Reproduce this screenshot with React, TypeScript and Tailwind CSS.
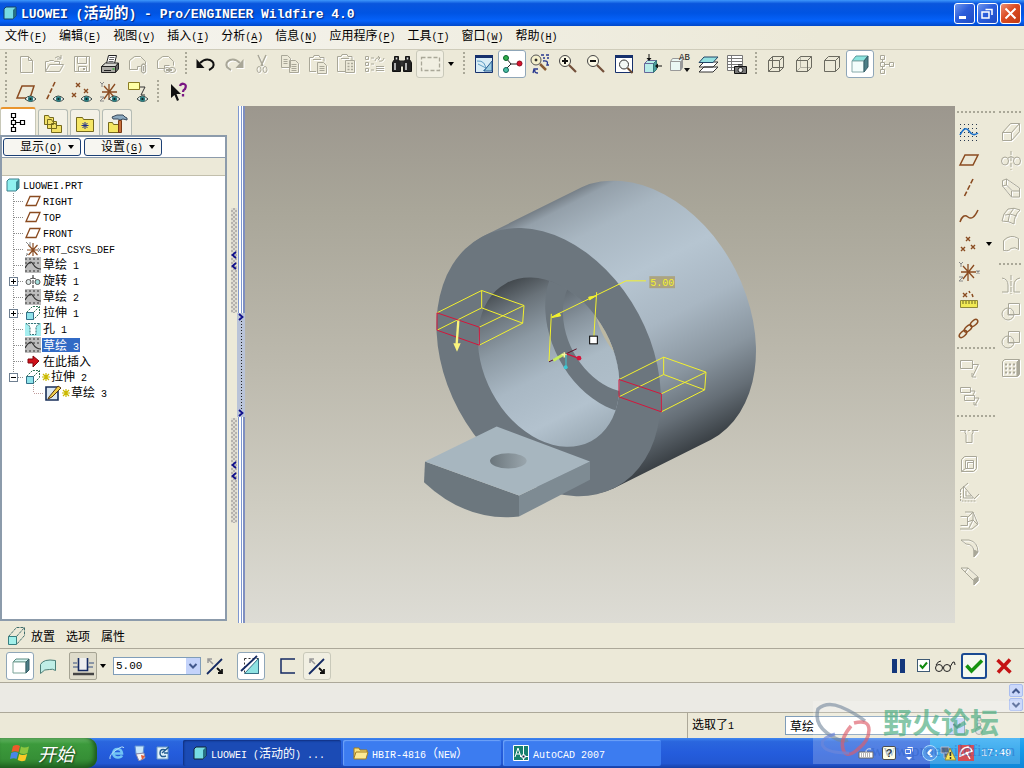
import React, { type ReactNode } from "react";

const LATIN = "font-['Liberation_Mono',monospace]";

/* Splits mixed text so that ideographs and half-width letters each get their own face and size. */
function T({ children, latin = "text-[10px]" }: { children: string; latin?: string }) {
  const parts = children.split(/([\u2e80-\uffef]+)/).filter(Boolean);
  return (
    <span className="whitespace-pre">
      {parts.map((p, i) =>
        /[\u2e80-\uffef]/.test(p) ? (
          <span key={i}>{p}</span>
        ) : (
          <span key={i} className={LATIN + " " + latin}>
            {p}
          </span>
        ),
      )}
    </span>
  );
}

function Ic({ children, dim = false, className = "text-[#222]" }: { children: ReactNode; dim?: boolean; className?: string }) {
  return (
    <svg
      viewBox="0 0 24 24"
      fill="none"
      stroke="currentColor"
      strokeWidth="1"
      aria-hidden="true"
      className={"size-6 shrink-0 " + (dim ? "text-[#a9a798] drop-shadow-[1px_1px_0_#fff]" : className)}
    >
      {children}
    </svg>
  );
}

const CUBE = "M4.5 8.5h11v11h-11zM4.5 8.5l4-4h11v11l-4 4M15.5 8.5l4-4";
const eye = (
  <g stroke="none">
    <path d="M11 19q5-6 11 0q-5 5-11 0z" fill="#fff" stroke="#35423f" />
    <circle cx="16.5" cy="19" r="2.7" fill="#2b7d80" />
    <circle cx="16.5" cy="19" r="1.1" fill="#102020" />
  </g>
);
const brown = "#8a4b20";
const cross = (x: number, y: number, c = brown, r = 2) => (
  <path d={`M${x - r} ${y - r}l${2 * r} ${2 * r}m0 ${-2 * r}l${-2 * r} ${2 * r}`} stroke={c} strokeWidth="1.4" />
);

const I = {
  newFile: (<Ic dim><path d="M6.5 4.5h8l4 4v12h-12zM14.5 4.5v4h4" /></Ic>),
  open: (<Ic dim><path d="M3.5 19.5v-10h3l1-1h4l1 1h5v3M3.5 19.5l4-7h14l-4 7zM13 6q3-3 6 0m0-3v4h-4" /></Ic>),
  save: (<Ic dim><path d="M4.5 4.5h15v15h-15zM7.5 4.5v7h9v-7M8.5 19.5v-5h8v5" /><path d="M14 16v2" strokeWidth="2" /></Ic>),
  print: (
    <Ic>
      <path d="M8.5 11.5l2-8h8l-2 8z" fill="#fff" />
      <path d="M11.5 5.5h5M11 7.500h5M10.500 9.500h5" stroke="#666" />
      <path d="M3.500 14.500l4-3.500h13l-3 3.500z" fill="#d7d7d2" />
      <path d="M3.500 14.500h14v6h-14z" fill="#aaa9a4" />
      <path d="M17.500 14.500l3-3.500v6l-3 3.500z" fill="#666" />
      <path d="M6 18.500h7" /><path d="M14.500 17h2" stroke="#0a0" />
    </Ic>
  ),
  mailA: (<Ic dim><path d="M3.500 17.500v-9l5-4h6l5 5v3M3.500 17.500h8v-3h3" /><path d="M15.500 13.500q2-3 4 0v6q-2 3-4 0zM17.500 14v5" strokeWidth="1.300" /></Ic>),
  mailB: (<Ic dim><path d="M3.500 16.500v-8l5-4h6l5 5v4M3.500 16.500h7v-3h5" /><ellipse cx="13" cy="18" rx="3" ry="2.500" /><ellipse cx="18" cy="18" rx="3.500" ry="2.500" /><path d="M12 18h6" strokeWidth="2" /></Ic>),
  undo: (<Ic><path d="M6 11q5-5 10-3t3 7q-2 2-4 3" stroke="#111" strokeWidth="2" /><path d="M2.500 7v9h8z" fill="#111" stroke="none" /></Ic>),
  redo: (<Ic dim><path d="M18 11q-5-5-10-3t-3 7q2 2 4 3" strokeWidth="2" /><path d="M21.500 7v9h-8z" fill="currentColor" stroke="none" /></Ic>),
  cut: (<Ic dim><path d="M8 3l5 11M16 3l-5 11" strokeWidth="1.500" /><ellipse cx="9" cy="17.500" rx="2" ry="3" /><ellipse cx="15" cy="17.500" rx="2" ry="3" /></Ic>),
  copy: (<Ic dim><path d="M3.500 3.500h6l3 3v9h-9zM11.500 8.500h6l3 3v9h-9z" fill="#ece9d8" /><path d="M5.500 7.500h4M5.500 9.500h4M5.500 11.500h4M13.500 12.500h5M13.500 14.500h5M13.500 16.500h5M13.500 18.500h5" /></Ic>),
  paste: (<Ic dim><path d="M10 19.500H3.500v-14H7l1-2h5l1 2h4v4M7 7.500h8" /><path d="M11.500 10.500h6l3 3v8h-9z" fill="#ece9d8" /><path d="M13.500 14.500h5M13.500 16.500h5M13.500 18.500h5" /></Ic>),
  pasteSp: (<Ic dim><path d="M11 19.500H3.500v-15H7l1-2h5l1 2h4v4M7 6.500h8" /><path d="M11.500 8.500h9v12h-9z" fill="#ece9d8" /><path d="M13.500 11.500h2m1.500 0h2M13.500 14.500h2m1.500 0h2M13.500 17.500h2m1.500 0h2" strokeWidth="1.500" /></Ic>),
  regen: (<Ic dim><path d="M3.500 4.500h3v3h-3zM3.500 10.500h3v3h-3zM3.500 16.500h3v3h-3zM9 6h3M9 12h3M9 18h3M13 9q1-4 5-3m-2-2l2 2-2 2M22 6q-1 4-5 3M14 14.500h8M14 16.500h8M14 18.500h8" /></Ic>),
  find: (
    <Ic>
      <path d="M4.500 4.500h4v3l2 3v9h-8v-9l2-3zM15.500 4.500h4v3l2 3v9h-8v-9l2-3z" fill="#222" stroke="#111" />
      <path d="M10 9h4v5h-4z" fill="#333" />
      <path d="M5 11v7M16 11v7M6.500 5.500v2M17.500 5.500v2" stroke="#ddd" strokeWidth="1.500" />
    </Ic>
  ),
  box: (<Ic className="text-[#a9a798]"><path d="M3.500 5.500h18v13h-18z" strokeDasharray="4 2" strokeWidth="1.300" /></Ic>),
  sketchRef: (<Ic><path d="M3.500 3.500h17v17h-17z" fill="#d8ecf6" stroke="#16306c" /><path d="M3 3h18v3H3z" fill="#16306c" stroke="none" /><path d="M5 9q9-1 9 10M11 19l9-9M6 12l8 4" stroke="#5d9cc4" /><path d="M12 19l8-10v10z" fill="#9bcce0" stroke="#2d5f94" /></Ic>),
  spin: (<Ic><path d="M6 6l5 6-5 5M11 12h8" stroke="#222" /><circle cx="6" cy="6" r="2.500" fill="#2fae4a" stroke="#0b602a" /><circle cx="6" cy="18" r="2.500" fill="#4cc0a4" stroke="#14665a" /><circle cx="19.500" cy="11.500" r="2.500" fill="#d8102c" stroke="#8d0d1e" /></Ic>),
  orient: (<Ic><circle cx="8" cy="8" r="5" fill="#f4efcc" stroke="#555" /><circle cx="8" cy="8" r="1" fill="#222" /><path d="M12 12l6 6" stroke="#8a5c35" strokeWidth="2.500" /><path d="M13 3h3m2 0h3M15 6h2m2 0h2M15 9q6-1 4 4l2 0M7 18q-1 3 3 3M10 17l-4 0-1 4" stroke="#27378e" strokeWidth="1.300" /></Ic>),
  zoomIn: (<Ic><circle cx="9" cy="9" r="5.500" fill="#fbf8e5" stroke="#444" /><path d="M6 9h6M9 6v6" stroke="#111" strokeWidth="2" /><path d="M13 13l7 7" stroke="#73503a" strokeWidth="2.200" /></Ic>),
  zoomOut: (<Ic><circle cx="9" cy="9" r="5.500" fill="#fbf8e5" stroke="#444" /><path d="M6 9h6" stroke="#111" strokeWidth="2" /><path d="M13 13l7 7" stroke="#73503a" strokeWidth="2.200" /></Ic>),
  refit: (<Ic><path d="M3.500 3.500h17v17h-17z" fill="#fff" stroke="#16306c" /><path d="M3 3h18v3H3z" fill="#16306c" stroke="none" /><circle cx="12" cy="12.500" r="4.500" fill="#f3f8f6" stroke="#333" /><path d="M15.500 16l5 5" stroke="#6b4a32" strokeWidth="2" /></Ic>),
  orientBox: (<Ic><path d="M4.500 11.500h9v9h-9zM4.500 11.500l3-3h9v9l-3 3" fill="#b6ece8" stroke="#669" /><path d="M13.500 11.500l3-3v9l-3 3z" fill="#4a9a9c" stroke="#377" /><path d="M9 2v5M22 14h-5" stroke="#111" /><path d="M6.500 6h5L9 9zM18 11.500v5l-3-2.500z" fill="#111" stroke="none" /></Ic>),
  views: (<Ic><path d="M2.500 9.500l2-3h10v9l-2 3h-10zM2.500 9.500h10v9" fill="#eaf7f4" stroke="#999" /><path d="M12.500 9.500l2-3v9l-2 3z" fill="#999" stroke="none" /><text x="11" y="8" fontSize="9" fontFamily="Liberation Mono" fill="#111" stroke="none">AB</text><path d="M16 16h6l-3 4z" fill="#111" stroke="none" /></Ic>),
  layers: (<Ic><path d="M3 20l5-5h14l-5 5zM3 15l5-5h14l-5 5z" fill="#fff" stroke="#333" /><path d="M3 10.500l5-5.500h14l-5 5.500z" fill="#94e0e0" stroke="#246" /></Ic>),
  viewMgr: (<Ic><path d="M3.500 3.500h15v15h-15zM3.500 6.500h15M3.500 9.500h15M3.500 12.500h15M3.500 15.500h15M7.500 3.500v15" fill="#fff" stroke="#777" /><path d="M10.500 14.500h12v7h-12zM14 13h4" fill="#777" stroke="#111" /><circle cx="16.500" cy="18" r="2.500" fill="#eee" /></Ic>),
  wire: (<Ic className="text-[#6b6a60]"><path d={CUBE + "M8.500 4.500v11h11M8.500 15.500l-4 4"} /></Ic>),
  hidden: (<Ic className="text-[#6b6a60]"><path d="M8.500 4.500v11h11M8.500 15.500l-4 4" stroke="#b3b1a4" /><path d={CUBE} /></Ic>),
  noHidden: (<Ic className="text-[#6b6a60]"><path d={CUBE} /></Ic>),
  shaded: (<Ic><path d="M4 9l4-5h12l-4 5z" fill="#8be4df" stroke="#5a9a9c" /><path d="M4 9h12v11H4z" fill="#f4fdfc" stroke="#8aa" /><path d="M16 9l4-5v11l-4 5z" fill="#4c7e86" stroke="#355d66" /></Ic>),
  treeDim: (<Ic dim><path d="M4.500 3.500h4v4h-4zM4.500 10.500h4v4h-4zM4.500 17.500h4v4h-4zM13.500 10.500h4v4h-4zM6.500 7.500v3m0 4v3m2-5h5" /></Ic>),
  plane: (<Ic><path d="M3 17L8 7h13l-5 10z" stroke={brown} strokeWidth="1.500" /></Ic>),
  planeEye: (<Ic><path d="M3 18L8 6h12l-4 12z" stroke={brown} strokeWidth="1.500" />{eye}</Ic>),
  axis: (<Ic><path d="M16 3L7 21" stroke={brown} strokeWidth="1.600" strokeDasharray="5 2" /></Ic>),
  axisEye: (<Ic><path d="M13 2L4 21" stroke={brown} strokeWidth="1.600" strokeDasharray="5 2" />{eye}</Ic>),
  pts: (<Ic>{cross(11, 7)}{cross(6, 17)}{cross(16, 15)}</Ic>),
  ptsEye: (<Ic>{cross(8, 5)}{cross(4, 15)}{cross(16, 11)}{eye}</Ic>),
  csys: (<Ic><path d="M11 4v17M4 12h15M6 6l11 12M17 5L6 19" stroke={brown} strokeWidth="1.300" />{cross(21, 12, "#888", 1.5)}<path d="M2 2l2 2 2-2M4 4v3M2 17h4l-4 4h4" stroke="#888" /></Ic>),
  csysEye: (<Ic><path d="M11 4v16M4 12h15M6 6l11 12M17 4L6 19" stroke={brown} strokeWidth="1.300" /><path d="M2 2l2 2 2-2M4 4v3M2 17h4l-4 4h4" stroke="#888" />{eye}</Ic>),
  note: (<Ic><path d="M2.500 2.500h11v7h-11z" fill="#ffffa5" stroke="#8a7c22" /><path d="M14 7h5l-4 8h4" stroke="#333" />{eye}</Ic>),
  help: (<Ic><path d="M5 4v14l3.500-3 2.500 6 2-1-2.500-6H15z" fill="#111" stroke="none" /><path d="M14 6q1-3 4-2t1 5q-2 1-2 3M17 14v2.500" stroke="#7a1683" strokeWidth="2.300" /></Ic>),
  sketch: (<Ic><path d="M3 4.500h18M3 8.500h18M3 12.500h18M3 16.500h18M3 20.500h18" stroke="#26374e" strokeDasharray="1 3" /><path d="M3 15q5-10 9-4t9 2" stroke="#1b70c9" strokeWidth="1.600" /></Ic>),
  curve: (<Ic><path d="M3 18q3-9 8-5t10-7" stroke={brown} strokeWidth="1.500" /></Ic>),
  ruler: (<Ic>{cross(8, 7)}<path d="M12 3l1 2m2 1l1 3" stroke={brown} strokeWidth="1.500" /><path d="M3.500 12.500h17v7h-17z" fill="#f1ea54" stroke="#8e8838" /><path d="M6 13v3m3-3v3m3-3v3m3-3v3m3-3v3" stroke="#6b6620" /></Ic>),
  chain: (<Ic>{[[6, 18], [11, 12.5], [17, 7]].map(([x, y]) => <ellipse key={x} cx={x} cy={y} rx="4.500" ry="2.400" transform={`rotate(-42 ${x} ${y})`} stroke={brown} strokeWidth="1.500" />)}</Ic>),
  extrude: (<Ic dim><path d="M3.500 12.500h9v8h-9zM3.500 12.500l8-9h9v8l-8 9M12.500 12.500l8-9" /></Ic>),
  revolve: (<Ic dim><ellipse cx="6" cy="13" rx="3.500" ry="4" /><ellipse cx="18" cy="13" rx="3.500" ry="4" /><path d="M9 10q3-3 6 0" /><path d="M12 3v19" strokeDasharray="4 2" /></Ic>),
  sweep: (<Ic dim><path d="M3.500 4.500l4-1.500v6l-4 1zM7.500 3l13 9v9h-8l-9-11M7.500 9l6 6h7M12.500 21v-6" /></Ic>),
  blend: (<Ic dim><path d="M9 5q6-2 12 1-6 5-6 14-5-3-12-3 1-8 6-12zM6 11q5-2 12 1M15 4q-6 6-6 14" /></Ic>),
  surf: (<Ic dim><path d="M4.500 18.500v-10q7-7 15-2v11q-3-3-8-1-1 3-7 2z" /></Ic>),
  mirror: (<Ic dim><path d="M12 3v19" strokeDasharray="5 1" /><path d="M3 6q6 1 6 7v7H3M21 6q-6 1-6 7v7h6" /></Ic>),
  merge: (<Ic dim><path d="M9.500 3.500h11v11h-11z" /><circle cx="9" cy="14" r="6" /><path d="M9 9v6h6" /></Ic>),
  pattern: (<Ic dim><path d="M3.500 5.500l2-2h15v15l-2 2h-15z" /><path d="M20 4v14l-2 2V6z" fill="currentColor" /><path d="M6 8.500h10M6 12.500h10M6 16.500h10" strokeDasharray="2 2" strokeWidth="2" /></Ic>),
  annot: (<Ic dim><path d="M3.500 4.500h12v8h-12zM15.500 8.500h6l-6 12M15 17v4h4" /></Ic>),
  annot2: (<Ic dim><path d="M3.500 3.500h10v5h-10zM7.500 11.500h10v5h-10zM13 7h5l-2 4M17 14h5l-4 7M17 18v3h3" /></Ic>),
  hole: (<Ic dim><path d="M3 6.500h5v2l1 2v8h6v-8l1-2v-2h5" /><path d="M3 6.500h18" strokeDasharray="2 2" /></Ic>),
  shell: (<Ic dim><path d="M4.500 7.500l3-3h12v12l-3 3h-12zM8.500 8.500h8v8h-8zM10.500 10.500h6M10.500 10.500v6M4.500 19.500l4-3" /></Ic>),
  rib: (<Ic dim><path d="M3 10l8-7M6.500 6v12h10zM9 11v5h5M17 19l5-5" /><path d="M3.500 10v11h15" strokeDasharray="2 1" /></Ic>),
  draft: (<Ic dim><path d="M3.500 8.500h7v9h-7M8 4h8l5 12-6 5H3M11 9l5-5M10 14l6-2 5 5M16 4v8l-4 8" /></Ic>),
  round: (<Ic dim><path d="M4 4h8q9 2 9 12l-4 5v-6q-1-7-8-7l-5-4" /><path d="M17 14l4 2-4 5z" fill="currentColor" /></Ic>),
  chamfer: (<Ic dim><path d="M4 4h7l10 9v4l-4 4v-4l-9-9-4-4M11 4L8 8" /><path d="M17 15l4-2v4l-4 4z" fill="currentColor" /></Ic>),
  solid: (<Ic><path d="M5 8l3-3h13l-3 3z" fill="#d9f7f4" stroke="#5a8a80" /><path d="M5 8h13v11H5z" fill="#fff" stroke="#7aa398" /><path d="M18 8l3-3v11l-3 3z" fill="#4c7e86" stroke="#355d66" /></Ic>),
  surface: (<Ic><path d="M4.500 19.500v-9q3-6 15-4v10q-3-2-6-1-5-1-9 4z" fill="#bfeee6" stroke="#4b7f78" /></Ic>),
  depth: (<Ic><path d="M2 9h4m12 0h5M2 13h20" stroke="#8a95a5" strokeWidth="2" /><path d="M7.500 4v12.500h9V4" stroke="#142a63" strokeWidth="1.600" fill="#eee" /><path d="M2 20h21" stroke="#444" strokeWidth="2.500" /></Ic>),
  flip: (<Ic><path d="M4 20L19 5" stroke="#142a63" strokeWidth="1.800" /><path d="M5 5l5 5M5 9V5h4" stroke="#999" strokeWidth="1.500" /><path d="M14 14l5 5M15 19h4v-4" stroke="#111" strokeWidth="1.800" /></Ic>),
  removeMat: (<Ic><path d="M5.500 4.500h14v15h-14z" stroke="#333" strokeDasharray="2 2" /><path d="M19.500 4.500v15h-14z" fill="#8ee3e3" stroke="#356f86" /><path d="M2 17L18 2" stroke="#142a63" strokeWidth="1.800" /></Ic>),
  thin: (<Ic><path d="M20 5H6v14h14" stroke="#142a63" strokeWidth="1.500" /></Ic>),
  sweepTeal: (<Ic><path d="M4.500 12.500h8v8h-8z" fill="#a3f0ea" stroke="#387f80" /><path d="M4.500 12.500l8-9h8v8l-8 9M12.500 12.500l8-9" stroke="#3f6c6a" strokeDasharray="3 1" /></Ic>),
};

function Tool({ label, children, on = false, faint = false }: { label: string; children: ReactNode; on?: boolean; faint?: boolean }) {
  return (
    <button
      type="button"
      aria-label={label}
      className={
        "flex size-7 shrink-0 items-center justify-center rounded-[3px] " +
        (on ? "border border-[#8fa6b8] bg-white" : faint ? "border border-[#c9c9ba] bg-[#f1efe2]" : "")
      }
    >
      {children}
    </button>
  );
}

function Grip() {
  return (
    <span className="flex h-7 w-3 shrink-0 items-center justify-center">
      <span className="h-6 w-[2px] bg-[repeating-linear-gradient(180deg,#aaa898_0_2px,transparent_2px_4px)]" />
    </span>
  );
}
function HGrip() {
  return (
    <span className="flex h-3 w-full items-center px-0.5">
      <span className="h-[2px] w-full bg-[repeating-linear-gradient(90deg,#aaa898_0_2px,transparent_2px_4px)]" />
    </span>
  );
}
function Caret({ className = "" }: { className?: string }) {
  return (
    <svg viewBox="0 0 6 4" className={"h-1 w-1.5 shrink-0 " + className} aria-hidden="true">
      <path d="M0 0h6L3 4z" fill="currentColor" />
    </svg>
  );
}
function Chevron({ up = false }: { up?: boolean }) {
  return (
    <svg viewBox="0 0 10 8" fill="none" stroke="#42588c" strokeWidth="2" className="h-2 w-2.5" aria-hidden="true">
      <path d={up ? "M1.500 6L5 2.500 8.500 6" : "M1.500 2L5 5.500 8.500 2"} />
    </svg>
  );
}

const menus: [string, string][] = [
  ["文件", "F"], ["编辑", "E"], ["视图", "V"], ["插入", "I"], ["分析", "A"], ["信息", "N"],
  ["应用程序", "P"], ["工具", "T"], ["窗口", "W"], ["帮助", "H"],
];

function Mnemonic({ k }: { k: string }) {
  return (
    <span className="font-['Liberation_Mono',monospace] text-[10px]">
      (<span className="underline underline-offset-2">{k}</span>)
    </span>
  );
}

function TitleBar() {
  return (
    <header className="flex h-[26px] shrink-0 items-center bg-[linear-gradient(180deg,#3f97fb_0,#0a56dd_14%,#0054e3_50%,#0562fa_80%,#0148c9_100%)] pr-[3px] pl-[3px]">
      <svg viewBox="0 0 14 14" className="size-3.5 shrink-0" aria-hidden="true">
        <path d="M1 3l2-2h10v9l-3 3H1z" fill="#76dbe4" stroke="#164064" />
        <path d="M10 4l3-3v9l-3 3z" fill="#267283" />
      </svg>
      <h1 className="ml-1 flex-1 text-[15px] leading-6 font-bold text-white [text-shadow:1px_1px_1px_#06277c]">
        <T latin="text-[13px]">LUOWEI (活动的) - Pro/ENGINEER Wildfire 4.0</T>
      </h1>
      <div className="flex gap-[2px]">
        {["最小化", "还原", "关闭"].map((l, i) => (
          <button
            key={l}
            type="button"
            aria-label={l}
            className={
              "size-[21px] rounded-[3px] border border-white " +
              (i === 2 ? "bg-[linear-gradient(135deg,#ee9177,#db4b22_45%,#c03a12)]" : "bg-[linear-gradient(135deg,#6f97ee,#2c5edb_45%,#1e4bc4)]")
            }
          >
            <svg viewBox="0 0 19 19" fill="none" stroke="#fff" strokeWidth="2" className="size-full" aria-hidden="true">
              {i === 0 && <path d="M4 13.500h7" strokeWidth="3" />}
              {i === 1 && <path d="M4 8h7v6H4zM7.500 5.500H14V11" strokeWidth="1.500" />}
              {i === 2 && <path d="M4.500 4.500l10 10m0-10l-10 10" />}
            </svg>
          </button>
        ))}
      </div>
    </header>
  );
}

function Toolbars() {
  return (
    <div className="h-14 shrink-0">
      <div className="flex items-center">
        <Grip />
        <Tool label="新建">{I.newFile}</Tool>
        <Tool label="打开">{I.open}</Tool>
        <Tool label="保存">{I.save}</Tool>
        <Tool label="打印">{I.print}</Tool>
        <Tool label="发送附件">{I.mailA}</Tool>
        <Tool label="发送链接">{I.mailB}</Tool>
        <Grip />
        <Tool label="撤消">{I.undo}</Tool>
        <Tool label="重做">{I.redo}</Tool>
        <Tool label="剪切">{I.cut}</Tool>
        <Tool label="复制">{I.copy}</Tool>
        <Tool label="粘贴">{I.paste}</Tool>
        <Tool label="选择性粘贴">{I.pasteSp}</Tool>
        <Tool label="再生">{I.regen}</Tool>
        <Tool label="查找">{I.find}</Tool>
        <Tool label="选取框" faint>{I.box}</Tool>
        <button type="button" aria-label="选取选项" className="flex h-7 w-3.5 items-center justify-center"><Caret /></button>
        <Grip />
        <Tool label="重画">{I.sketchRef}</Tool>
        <Tool label="旋转中心" on>{I.spin}</Tool>
        <Tool label="定向模式">{I.orient}</Tool>
        <Tool label="放大">{I.zoomIn}</Tool>
        <Tool label="缩小">{I.zoomOut}</Tool>
        <Tool label="重新调整">{I.refit}</Tool>
        <Tool label="重定向">{I.orientBox}</Tool>
        <Tool label="已命名视图">{I.views}</Tool>
        <Tool label="层">{I.layers}</Tool>
        <Tool label="视图管理器">{I.viewMgr}</Tool>
        <Grip />
        <Tool label="线框">{I.wire}</Tool>
        <Tool label="隐藏线">{I.hidden}</Tool>
        <Tool label="无隐藏线">{I.noHidden}</Tool>
        <Tool label="着色" on>{I.shaded}</Tool>
        <Tool label="模型树">{I.treeDim}</Tool>
      </div>
      <div className="flex items-center">
        <Grip />
        <Tool label="基准平面显示">{I.planeEye}</Tool>
        <Tool label="基准轴显示">{I.axisEye}</Tool>
        <Tool label="基准点显示">{I.ptsEye}</Tool>
        <Tool label="坐标系显示">{I.csysEye}</Tool>
        <Tool label="注释显示">{I.note}</Tool>
        <Grip />
        <Tool label="帮助">{I.help}</Tool>
      </div>
    </div>
  );
}

const treeIcons: Record<string, ReactNode> = {
  plane: <path d="M1 12.500L5 3.500h10l-4 9z" stroke={brown} strokeWidth="1.300" />,
  csys: (<><path d="M8 2v13M2 9h11M3.500 4l9 10M12.500 4l-9 10" stroke={brown} strokeWidth="1.200" /><path d="M1 1l4 4M5 1v4M13 7l3 4m0-4l-3 4M1 13h2l-2 2" stroke="#888" /></>),
  sketch: (<><path d="M0 0h16v16H0z" fill="#bdbdbd" stroke="none" /><path d="M0 2h16M0 6h16M0 14h16" stroke="#333" strokeDasharray="2 2" /><path d="M0 11q5-9 8-4t8 5" stroke="#333" strokeWidth="1.200" /></>),
  revolve: (<><path d="M8 2v13" stroke="#222" strokeDasharray="4 1" /><ellipse cx="3.500" cy="9" rx="2.500" ry="2.500" fill="#dfe8e8" stroke="#555" /><ellipse cx="12.500" cy="9" rx="2.500" ry="2.500" fill="#a2dfdc" stroke="#555" /><path d="M5 6q3-2 6 0" stroke="#555" /></>),
  extrude: (<><path d="M1.500 7.500h7v7h-7z" fill="#8fe3ea" stroke="#33708a" /><path d="M1.500 7.500l6-6h7v7l-6 6M8.500 7.500l6-6" stroke="#2d7355" strokeDasharray="2 1" /></>),
  hole: (<><path d="M0 2h16v13H0z" fill="#a5eef0" stroke="none" /><path d="M1 2.500l4 3v8h6v-8l4-3z" fill="#fff" stroke="#3a7377" strokeDasharray="2 1" /></>),
  insert: <path d="M3 6h5V3l6 5-6 6v-4H3z" fill="#d0111b" stroke="#80070f" />,
  pencil: (<><path d="M1 2h12v13H1z" fill="#dbe7f1" stroke="#182f59" strokeWidth="1.600" /><path d="M4 12L13 1l3 2-9 9-4 2z" fill="#f1ce4c" stroke="#54350f" /></>),
};

const rows: { icon: string; label: string; box?: "+" | "-"; selected?: boolean; star?: boolean }[] = [
  { icon: "plane", label: "RIGHT" },
  { icon: "plane", label: "TOP" },
  { icon: "plane", label: "FRONT" },
  { icon: "csys", label: "PRT_CSYS_DEF" },
  { icon: "sketch", label: "草绘 1" },
  { icon: "revolve", label: "旋转 1", box: "+" },
  { icon: "sketch", label: "草绘 2" },
  { icon: "extrude", label: "拉伸 1", box: "+" },
  { icon: "hole", label: "孔 1" },
  { icon: "sketch", label: "草绘 3", selected: true },
  { icon: "insert", label: "在此插入" },
  { icon: "extrude", label: "拉伸 2", box: "-", star: true },
];

function TreeIcon({ name }: { name: string }) {
  return (
    <svg viewBox="0 0 16 16" fill="none" className="mr-px size-4 shrink-0" aria-hidden="true">
      {treeIcons[name]}
    </svg>
  );
}
function Star() {
  return (
    <svg viewBox="0 0 8 10" className="h-2.5 w-2 shrink-0" stroke="#cbb900" strokeWidth="1.200" aria-hidden="true">
      <path d="M4 1v8M0 5h8M1 2l6 6M7 2L1 8" />
    </svg>
  );
}

function ModelTree() {
  const tabs = [
    <Ic key="a" className="text-black"><path d="M5.500 3.500h4v4h-4zM5.500 10.500h4v4h-4zM5.500 17.500h4v4h-4zM14.500 10.500h4v4h-4zM7.500 7.500v3m0 4v3m2-5h5" strokeWidth="1.200" /></Ic>,
    <Ic key="b"><path d="M3.500 4.500h4l1 2h4v7h-9zM6.500 8.500h4l1 2h4v7h-9zM10.500 12.500h4l1 2h5v7h-10z" fill="#f3e168" stroke="#75691d" /></Ic>,
    <Ic key="c"><path d="M3.500 6.500h6l1 2h10v12h-17z" fill="#f5e663" stroke="#75691d" /><path d="M12 11v7M8.500 14.500h7M9.500 12l5 5m0-5l-5 5" stroke="#20308c" /></Ic>,
    <Ic key="d"><path d="M3.500 11.500h4l1 2h7v8h-12z" fill="#f5e663" stroke="#75691d" /><path d="M7 6l5-2h6l2 2 2 1v2l-4-1-3 1-2-1H8z" fill="#8ba9bf" stroke="#39495a" /><path d="M13.500 9.500h3v12h-3z" fill="#c9713c" stroke="#7a3a14" /></Ic>,
  ];
  const names = ["模型树", "文件夹浏览器", "收藏夹", "连接"];
  return (
    <aside className="flex w-[227px] shrink-0 flex-col pb-0.5">
      <div className="flex h-[29px] items-end gap-[2px] pt-px">
        {tabs.map((t, i) => (
          <button
            key={i}
            type="button"
            aria-label={names[i]}
            className={
              "flex items-center justify-center rounded-t-[3px] border border-b-0 " +
              (i === 0 ? "h-7 w-9 border-t-2 border-[#c8c8b8] border-t-[#e9952e] bg-white" : "h-[26px] w-[30px] border-[#b5bcb5] bg-[#f3f1e6]")
            }
          >
            {t}
          </button>
        ))}
      </div>
      <div className="flex flex-1 flex-col border-2 border-[#8c9bab] bg-white">
        <div className="flex items-center gap-[3px] py-px pl-px">
          {[["显示", "O"], ["设置", "G"]].map(([a, k]) => (
            <button key={k} type="button" className="flex h-[18px] w-[78px] items-center justify-end rounded-[3px] border border-[#1c4075] bg-[#f7f6f1] pr-1.5 text-[12px] leading-4">
              <span>{a}<Mnemonic k={k} /></span>
              <Caret className="ml-1.5" />
            </button>
          ))}
        </div>
        <div className="flex flex-1 flex-col border-t border-[#8c9bab]">
          <div className="h-[18px] border-b border-[#c2bfac] bg-[#ece9d8]" />
          <ul className="pt-px text-[12px] leading-[14px]">
            <li className="flex h-4 items-center pl-1">
              <svg viewBox="0 0 14 14" className="mr-[3px] size-3.5" aria-hidden="true">
                <path d="M1 3l2-2h10v9l-3 3H1z" fill="#8ff0ef" stroke="#3a7f8c" />
                <path d="M10 4l3-3v9l-3 3z" fill="#3b8a95" />
              </svg>
              <T>LUOWEI.PRT</T>
            </li>
            {rows.map((r, i) => (
              <li key={i} className="flex h-4 items-center">
                <svg viewBox="0 0 23 16" fill="none" stroke="#8c8c8c" className="h-4 w-[23px] shrink-0" aria-hidden="true">
                  <path d={i === rows.length - 1 ? "M11.500 0v8M12 8.500h10" : "M11.500 0v16M12 8.500h10"} strokeDasharray="1 1" />
                  {r.box && <rect x="7.500" y="4.500" width="8" height="8" fill="#fff" stroke="#6f7f91" />}
                  {r.box && <path d={r.box === "+" ? "M9 8.500h5M11.500 6v5" : "M9 8.500h5"} stroke="#000" />}
                </svg>
                <TreeIcon name={r.icon} />
                {r.star && <Star />}
                <span className={r.selected ? "h-3.5 overflow-hidden bg-[#316ac5] px-px text-white" : "px-px"}><T>{r.label}</T></span>
              </li>
            ))}
            <li className="flex h-4 items-center pl-[31px]">
              <svg viewBox="0 0 12 16" fill="none" stroke="#c09c9c" className="h-4 w-3" aria-hidden="true">
                <path d="M.5 0v8M1 8.500h10" strokeDasharray="1 1" />
              </svg>
              <TreeIcon name="pencil" />
              <Star />
              <span className="px-px"><T>草绘 3</T></span>
            </li>
          </ul>
        </div>
      </div>
    </aside>
  );
}

function Splitter() {
  const arrows = (right: boolean) => (
    <svg viewBox="0 0 6 8" fill="none" stroke="#10108c" strokeWidth="1.800" className="h-2 w-1.5" aria-hidden="true">
      <path d={right ? "M1 1l3.500 3L1 7" : "M5 1L1.500 4 5 7"} />
    </svg>
  );
  const stipple = (
    <div className="flex h-[105px] w-1.5 flex-col items-center justify-center gap-[3px] bg-[repeating-conic-gradient(#b5b2ae_0_25%,#dedcd2_0_50%)] bg-[length:4px_4px]">
      {arrows(false)}
      {arrows(false)}
    </div>
  );
  return (
    <div className="flex w-[18px] shrink-0">
      <div className="flex w-[10px] flex-col items-center justify-center gap-[105px] pt-0.5 pl-1">
        {stipple}
        {stipple}
      </div>
      <div className="flex w-2 flex-col">
        <div className="flex-1 bg-[linear-gradient(90deg,#ece9d8_0_1px,#7f98d0_1px_2px,#fff_2px_4px,#7f98d0_4px_5px,#fff_5px_6px,#7f8fc0_6px_8px)]" />
        <div className="flex h-[104px] flex-col items-center justify-between bg-[#b9c3d8]">
          {arrows(true)}
          <span className="w-px flex-1 bg-[repeating-linear-gradient(180deg,#222_0_1px,transparent_1px_3px)]" />
          {arrows(true)}
        </div>
        <div className="flex-1 bg-[linear-gradient(90deg,#ece9d8_0_1px,#7f98d0_1px_2px,#fff_2px_4px,#7f98d0_4px_5px,#fff_5px_6px,#7f8fc0_6px_8px)]" />
      </div>
    </div>
  );
}

function WireBox({ x, y }: { x: number; y: number }) {
  return (
    <g transform={`translate(${x} ${y})`} fill="none" strokeWidth="3">
      <path d="M0 0L134-67 261-22 127 43M134-67v52L0 52M134-15L257 31M261-22L257 31 127 97" stroke="#f3f12e" />
      <path d="M0 0l127 43v54L0 52z" stroke="#d3163c" />
    </g>
  );
}

function Viewport() {
  return (
    <main className="min-w-0 flex-1 bg-[linear-gradient(180deg,#9c978e_0,#a9a699_20%,#bcb9ad_50%,#cfcdc2_78%,#dddcd5_100%)]">
      <svg viewBox="-495 -192 2130 1548" className="block size-full" role="img" aria-label="LUOWEI">
        <defs>
          <linearGradient id="body" gradientUnits="userSpaceOnUse" x1="222" y1="196" x2="610" y2="954">
            <stop offset="0" stopColor="#737c84" />
            <stop offset=".04" stopColor="#94a0aa" />
            <stop offset=".16" stopColor="#a9b7c2" />
            <stop offset=".36" stopColor="#b6c5d1" />
            <stop offset=".55" stopColor="#a9b7c3" />
            <stop offset=".74" stopColor="#8a96a0" />
            <stop offset=".88" stopColor="#656e76" />
            <stop offset="1" stopColor="#3b4146" />
          </linearGradient>
          <linearGradient id="bore" gradientUnits="userSpaceOnUse" x1="294" y1="335" x2="538" y2="815">
            <stop offset="0" stopColor="#43494e" />
            <stop offset=".13" stopColor="#697279" />
            <stop offset=".32" stopColor="#8c99a3" />
            <stop offset=".55" stopColor="#a9b8c4" />
            <stop offset=".8" stopColor="#b3c2ce" />
            <stop offset="1" stopColor="#9cabb6" />
          </linearGradient>
          <linearGradient id="inner" gradientUnits="userSpaceOnUse" x1="527" y1="297" x2="709" y2="655">
            <stop offset="0" stopColor="#565e65" />
            <stop offset=".3" stopColor="#87939d" />
            <stop offset=".6" stopColor="#abbac5" />
            <stop offset="1" stopColor="#b1c0cb" />
          </linearGradient>
          <linearGradient id="pin" x1="0" y1="0" x2="1" y2="0">
            <stop offset="0" stopColor="#6b767c" />
            <stop offset="1" stopColor="#9aa6ad" />
          </linearGradient>
          <clipPath id="mouth"><ellipse cx="416" cy="575" rx="269" ry="193" transform="rotate(61.8 416 575)" /></clipPath>
          <clipPath id="throat"><ellipse cx="618" cy="476" rx="201" ry="145" transform="rotate(61.8 618 476)" /></clipPath>
        </defs>
        <path d="M222 196L515 50A426 306 61.800 0 1 903 808L610 954A426 306 61.800 0 1 222 196Z" fill="url(#body)" />
        <ellipse cx="416" cy="575" rx="426" ry="306" transform="rotate(61.8 416 575)" fill="#6c767e" />
        <g clipPath="url(#mouth)">
          <rect x="150" y="280" width="520" height="590" fill="url(#bore)" />
          <ellipse cx="618" cy="476" rx="269" ry="193" transform="rotate(61.8 618 476)" fill="#6c767e" />
          <g clipPath="url(#throat)">
            <rect x="420" y="260" width="400" height="440" fill="url(#inner)" />
            <ellipse cx="710" cy="431" rx="201" ry="145" transform="rotate(61.8 710 431)" fill="#bcb8a2" />
          </g>
        </g>
        <path d="M45 873L327 975V1038Q170 1055 42 935Z" fill="#6c777e" />
        <path d="M327 975L540 873V928L327 1038Z" fill="#7e8b93" />
        <path d="M45 873L260 768 540 873 327 975Z" fill="#a7b6bf" />
        <ellipse cx="295" cy="871" rx="55" ry="23" fill="url(#pin)" />
        <WireBox x={81} y={427} />
        <WireBox x={627} y={627} />
        <path d="M145 450l-5 70" stroke="#fbf57d" strokeWidth="7" />
        <path d="M130 518h22l-11 26z" fill="#fbf57d" />
        <g stroke="#f3f12e" strokeWidth="3" fill="#f3f12e">
          <path d="M424 430L417 572M560 365L551 508M424 440L648 331H708" fill="none" />
          <path d="M426 441l22-13 4 8zM558 376l-22 4 3 8z" />
        </g>
        <path d="M417 574L500 535" stroke="#5c1428" strokeWidth="3" />
        <path d="M430 570l30-18" stroke="#c6ee5c" strokeWidth="8" />
        <path d="M455 552h16M463 545v16" stroke="#fbf5a0" strokeWidth="5" />
        <path d="M470 550l35 13" stroke="#d3163c" strokeWidth="4" />
        <circle cx="507" cy="563" r="7" fill="#d3163c" />
        <path d="M468 552v36" stroke="#3cc8d4" strokeWidth="3" />
        <circle cx="467" cy="590" r="6" fill="#3cc8d4" />
        <rect x="539" y="497" width="23" height="23" fill="#fff" stroke="#000" strokeWidth="3" />
        <rect x="718" y="317" width="77" height="36" fill="#aba382" />
        <text x="721" y="345" fontSize="30" fontFamily="Liberation Mono, monospace" fill="#f3f12e">5.00</text>
      </svg>
    </main>
  );
}

function SideTools() {
  return (
    <aside className="flex w-[69px] shrink-0 items-start overflow-hidden">
      <div className="flex w-[42px] flex-col">
        <HGrip />
        <Tool label="草绘">{I.sketch}</Tool>
        <Tool label="平面">{I.plane}</Tool>
        <Tool label="轴">{I.axis}</Tool>
        <Tool label="曲线">{I.curve}</Tool>
        <div className="flex items-center">
          <Tool label="点">{I.pts}</Tool>
          <button type="button" aria-label="点选项" className="flex h-7 w-3 items-center justify-center"><Caret /></button>
        </div>
        <Tool label="坐标系">{I.csys}</Tool>
        <Tool label="分析">{I.ruler}</Tool>
        <Tool label="参照">{I.chain}</Tool>
        <HGrip />
        <Tool label="注释">{I.annot}</Tool>
        <Tool label="传播注释">{I.annot2}</Tool>
        <HGrip />
        <Tool label="孔">{I.hole}</Tool>
        <Tool label="壳">{I.shell}</Tool>
        <Tool label="筋">{I.rib}</Tool>
        <Tool label="拔模">{I.draft}</Tool>
        <Tool label="倒圆角">{I.round}</Tool>
        <Tool label="倒角">{I.chamfer}</Tool>
      </div>
      <div className="flex w-[27px] flex-col">
        <HGrip />
        <Tool label="拉伸">{I.extrude}</Tool>
        <Tool label="旋转">{I.revolve}</Tool>
        <Tool label="扫描">{I.sweep}</Tool>
        <Tool label="边界混合">{I.blend}</Tool>
        <Tool label="造型">{I.surf}</Tool>
        <HGrip />
        <Tool label="镜像">{I.mirror}</Tool>
        <Tool label="合并">{I.merge}</Tool>
        <Tool label="修剪">{I.merge}</Tool>
        <Tool label="阵列">{I.pattern}</Tool>
      </div>
    </aside>
  );
}

function Combo({ label, value, className }: { label: string; value: string; className: string }) {
  const cjk = /[\u2e80-\uffef]/.test(value);
  return (
    <div className={"relative border border-[#7f9db9] bg-white " + className}>
      <select
        aria-label={label}
        className={"block size-full appearance-none bg-transparent " + (cjk ? "pl-1 text-[12px]" : "pl-0.5 font-['Liberation_Mono',monospace] text-[11px]")}
      >
        <option>{value}</option>
      </select>
      <span className="pointer-events-none absolute inset-y-0 right-0 my-auto flex h-4 w-3.5 items-center justify-center bg-[#c4d3fa]">
        <Chevron />
      </span>
    </div>
  );
}

function Dashboard() {
  return (
    <section className="shrink-0">
      <div className="flex h-[26px] items-center border-b border-[#aca899] pl-1 text-[12px]">
        {I.sweepTeal}
        <div className="ml-[3px] flex gap-[11px]">
          {["放置", "选项", "属性"].map((t) => (
            <button key={t} type="button">{t}</button>
          ))}
        </div>
      </div>
      <div className="flex h-[34px] items-center border-b border-[#aca899] pr-[11px] pl-1.5">
        <Tool label="实体" on>{I.solid}</Tool>
        <Tool label="曲面">{I.surface}</Tool>
        <button type="button" aria-label="深度" className="ml-[7px] flex size-7 items-center justify-center rounded-[2px] border border-[#a5a393] bg-[#dfdccb]">{I.depth}</button>
        <button type="button" aria-label="深度选项" className="flex h-7 w-3 items-center justify-center"><Caret /></button>
        <Combo label="深度值" value="5.00" className="ml-1 h-[18px] w-[88px]" />
        <Tool label="反向">{I.flip}</Tool>
        <span className="w-2" />
        <Tool label="移除材料" on>{I.removeMat}</Tool>
        <span className="w-2" />
        <Tool label="加厚">{I.thin}</Tool>
        <span className="w-0.5" />
        <Tool label="反转侧" faint>{I.flip}</Tool>
        <span className="flex-1" />
        <button type="button" aria-label="暂停" className="mr-3 flex gap-[3px]">
          <span className="h-3.5 w-[5px] bg-[#14377c]" />
          <span className="h-3.5 w-[5px] bg-[#14377c]" />
        </button>
        <label className="flex items-center gap-1">
          <span className="grid size-[13px]">
            <input
              type="checkbox"
              defaultChecked
              aria-label="预览"
              className="peer col-start-1 row-start-1 size-[13px] appearance-none border border-[#3f5a74] bg-white"
            />
            <svg viewBox="0 0 13 13" fill="none" stroke="#128a12" strokeWidth="2" className="pointer-events-none invisible col-start-1 row-start-1 size-[13px] peer-checked:visible" aria-hidden="true">
              <path d="M3 6l2.500 3L10 3.500" />
            </svg>
          </span>
          <svg viewBox="0 0 22 14" fill="none" stroke="#222" className="h-3.5 w-[22px]" aria-hidden="true">
            <circle cx="5" cy="9" r="3.500" />
            <circle cx="13" cy="9" r="3.500" />
            <path d="M2 6q2-4 5-4M16 8l3-5q2-1 2 3M8.500 8h1" />
          </svg>
        </label>
        <button type="button" aria-label="确定" className="ml-[5px] flex size-[26px] items-center justify-center rounded-[3px] border-2 border-[#1a4a92] bg-[#f5f8ef]">
          <svg viewBox="0 0 20 20" fill="none" stroke="#16930f" strokeWidth="3.500" className="size-5" aria-hidden="true">
            <path d="M2.500 9.500l5 5.500L18 4.500" />
          </svg>
        </button>
        <button type="button" aria-label="取消" className="ml-2">
          <svg viewBox="0 0 18 18" fill="none" stroke="#c51414" strokeWidth="3.500" className="size-[18px]" aria-hidden="true">
            <path d="M2.500 3l13 12.500M15 2.500L3 15.500" />
          </svg>
        </button>
      </div>
    </section>
  );
}

function Status() {
  return (
    <section className="shrink-0">
      <div className="flex h-[30px] justify-end border-b border-[#aca899] bg-[#ebeae4]">
        <div className="flex w-[15px] flex-col justify-center gap-px">
          {[true, false].map((u) => (
            <button key={String(u)} type="button" aria-label={u ? "向上滚动" : "向下滚动"} className="flex h-[13px] w-3.5 items-center justify-center rounded-[2px] border border-[#a9bdf0] bg-[#cbd8fa]">
              <Chevron up={u} />
            </button>
          ))}
        </div>
      </div>
      <div className="flex h-[25px] items-center justify-end text-[12px]">
        <div className="flex h-full w-[98px] items-center border-l border-[#aca899] pl-1 leading-5"><T>选取了1</T></div>
        <Combo label="过滤器" value="草绘" className="h-[19px] w-[180px]" />
        <svg viewBox="0 0 12 20" className="mr-[39px] ml-2 h-5 w-3" stroke="#999" fill="#ddd" aria-hidden="true">
          <circle cx="6" cy="3" r="2" /><circle cx="6" cy="9" r="2" /><circle cx="6" cy="15" r="3.500" />
        </svg>
      </div>
    </section>
  );
}

function Taskbar() {
  const task = "flex h-[26px] w-[158px] items-center rounded-[2px] pl-2.5 text-[12px] text-white ";
  return (
    <footer className="flex h-[30px] shrink-0 items-center bg-[linear-gradient(180deg,#3f86f0_0,#2a66de_12%,#245cdc_50%,#2257d2_85%,#173fa5_100%)]">
      <button type="button" className="flex h-full w-[97px] items-center gap-2 rounded-r-[10px] bg-[linear-gradient(180deg,#67b767_0,#3c9a3c_20%,#368f36_70%,#246a24_100%)] pl-2.5 text-[18px] text-white italic shadow-[inset_-3px_-1px_4px_#1d5a1d] [text-shadow:1px_1px_2px_#1c3c1c]">
        <svg viewBox="0 0 20 18" className="h-[18px] w-5" aria-hidden="true">
          <path d="M3 2q4-2 7 0L8.500 8Q5 6.500 1.500 8z" fill="#ee5a2a" />
          <path d="M11 2.500q3 2 8 0L17.500 9q-4 2-8 0z" fill="#8cc63f" />
          <path d="M1.200 9q4-2 7 0L6.500 15Q4 13.500 0 15z" fill="#4a86e8" />
          <path d="M9.200 10q3 2 8 0l-2 6.500q-4 1.500-7.500-.5z" fill="#fbc926" />
        </svg>
        开始
      </button>
      <div className="ml-3 flex w-[74px] items-center gap-[7px]">
        <svg viewBox="0 0 16 16" className="size-4" fill="none" aria-hidden="true">
          <path d="M4 8.500h9Q12.500 4 8.500 4T4 8.500q1 4 5 4 3 0 4-2" stroke="#71c4f5" strokeWidth="2.500" />
          <path d="M1 14Q0 10 7 5t8-2" stroke="#b5def8" />
        </svg>
        <svg viewBox="0 0 16 16" className="size-4" aria-hidden="true">
          <path d="M3 1h9l-1 8H4z" fill="#c6e6fb" stroke="#5f8fd0" />
          <path d="M4 9l8-1 1 5-6 3z" fill="#f4f4f4" stroke="#88a" /><path d="M9 10l4 1-3 4z" fill="#e45b32" />
        </svg>
        <svg viewBox="0 0 16 16" className="size-4" fill="none" aria-hidden="true">
          <path d="M2 2h11v12H2z" fill="#dff1fb" stroke="#6f9cc6" />
          <path d="M11 5q-6-2-6 3t6 3M7 8l7-6M9 8h4" stroke="#235c91" strokeWidth="1.500" />
        </svg>
      </div>
      <div className="flex min-w-0 flex-1 gap-[2px]">
        <button type="button" className={task + "bg-[#1b4bb5] shadow-[inset_1px_1px_2px_#0f2f7d]"}>
          <svg viewBox="0 0 14 14" className="mr-1 size-3.5" aria-hidden="true">
            <path d="M1 3l2-2h10v9l-3 3H1z" fill="#76dbe4" stroke="#123" /><path d="M10 4l3-3v9l-3 3z" fill="#267283" />
          </svg>
          <T>LUOWEI (活动的) ...</T>
        </button>
        <button type="button" className={task + "bg-[#3c7cf0] shadow-[inset_1px_1px_1px_#6fa3f8]"}>
          <svg viewBox="0 0 16 14" className="mr-[3px] h-3.5 w-4" aria-hidden="true">
            <path d="M1 12V2h5l1 2h7v2" fill="#f8e27c" stroke="#a37c1d" /><path d="M1 12l2-6h12l-2 7H1z" fill="#fbe994" stroke="#a37c1d" />
          </svg>
          <T>HBIR-4816（NEW）</T>
        </button>
        <button type="button" className={task + "bg-[#3c7cf0] shadow-[inset_1px_1px_1px_#6fa3f8]"}>
          <svg viewBox="0 0 16 16" fill="none" className="mr-1 size-4" aria-hidden="true">
            <path d="M.5.5h15v15H.5z" fill="#17806f" stroke="#fff" />
            <path d="M2 12L5 3l3 9M3 9h4M10.500 1v14M7 11.500h8" stroke="#fff" /><path d="M9 10h3v3H9z" fill="#124" stroke="#fff" />
          </svg>
          <T>AutoCAD 2007</T>
        </button>
      </div>
      <div className="mr-4 flex items-center gap-2">
        <svg viewBox="0 0 16 12" className="h-3 w-4" aria-hidden="true">
          <path d="M1 5h14v6H1z" fill="#fff" stroke="#444" /><path d="M3 7h10M3 9h10" stroke="#444" strokeDasharray="1 1" /><path d="M8 5q0-4 5-3" fill="none" stroke="#ddd" />
        </svg>
        <span className="size-3.5 rounded-[2px] border border-[#222] bg-[#ffffe1] text-center font-['Liberation_Sans',sans-serif] text-[11px] leading-3 font-bold text-black">?</span>
        <svg viewBox="0 0 10 16" className="h-4 w-2.5" fill="none" stroke="#fff" aria-hidden="true">
          <path d="M1.500 4.500h5v4h-5zM3.500 2.500h5v4" /><path d="M2 12h6l-3 3z" fill="#fff" stroke="none" />
        </svg>
      </div>
      <div className="flex h-full w-[94px] items-center bg-[linear-gradient(180deg,#2aa8f3_0,#149aea_40%,#0f86d8_100%)]">
        <button type="button" aria-label="显示隐藏的图标" className="-ml-2 flex size-4 items-center justify-center rounded-full border border-[#9cd4fa] bg-[#2a7fe4]">
          <svg viewBox="0 0 8 8" className="size-2" fill="none" stroke="#fff" strokeWidth="2" aria-hidden="true"><path d="M6 0L2 4l4 4" /></svg>
        </button>
        <svg viewBox="0 0 16 16" className="ml-0.5 size-4" aria-hidden="true">
          <path d="M1 2h8v6H1zM4 8h8v5H4z" fill="#34495e" stroke="#9ac" /><path d="M10 3l6 12H5z" fill="#f8e12d" stroke="#7c6a08" /><path d="M10.500 7v4m0 1v2" stroke="#000" strokeWidth="1.500" />
        </svg>
        <svg viewBox="0 0 16 16" className="ml-0.5 size-4" fill="none" stroke="#fff" aria-hidden="true">
          <path d="M0 0h16v16H0z" fill="#c8242b" stroke="none" /><path d="M2 11Q2 3 10 2q3 1 4 4zM8 7l4 7" strokeWidth="1.500" />
        </svg>
        <span className="ml-[7px] font-['Liberation_Mono',monospace] text-[10px] text-white">17:49</span>
      </div>
    </footer>
  );
}

function Watermark() {
  return (
    <div className="pointer-events-none absolute right-1 bottom-1 flex h-[63px] w-[207px] bg-white/20">
      <svg viewBox="0 0 62 63" fill="none" className="h-[63px] w-[62px] shrink-0" aria-hidden="true">
        <path d="M52 20Q42 12 28 6T5 8Q1 22 14 32T35 39" stroke="#71859b" strokeWidth="3.500" opacity=".6" />
        <path d="M41 22Q56 18 56 29T44 49Q33 58 30 48T38 25" stroke="#dd5c68" strokeWidth="3.500" opacity=".65" />
        <path d="M22 33Q6 38 10 45t26 7" stroke="#6c86d8" strokeWidth="3" opacity=".7" />
      </svg>
      <div className="-ml-1 flex flex-col">
        <span className="pl-3 text-[29px] leading-10 font-bold text-[#4fae83]/70">野火论坛</span>
        <span className="font-['Liberation_Serif',serif] text-[17px] leading-5 text-[#2357b8]/40">www.proewildfire.cn</span>
      </div>
    </div>
  );
}

export default function App() {
  return (
    <div className="relative flex min-h-screen w-full flex-col overflow-hidden bg-[#ece9d8] font-['Noto_Sans_CJK_SC',sans-serif] text-black">
      <TitleBar />
      <nav className="flex h-6 shrink-0 items-center gap-3 border-b border-[#cfccba] bg-[linear-gradient(90deg,#f6f5f1,#ece9d8_80%)] pb-0.5 pl-[5px] text-[12px] leading-5">
        {menus.map(([t, k]) => (
          <button key={k} type="button" className="whitespace-nowrap">
            {t}
            <Mnemonic k={k} />
          </button>
        ))}
      </nav>
      <Toolbars />
      <div className="flex flex-1">
        <ModelTree />
        <Splitter />
        <Viewport />
        <SideTools />
      </div>
      <Dashboard />
      <Status />
      <Taskbar />
      <Watermark />
    </div>
  );
}
